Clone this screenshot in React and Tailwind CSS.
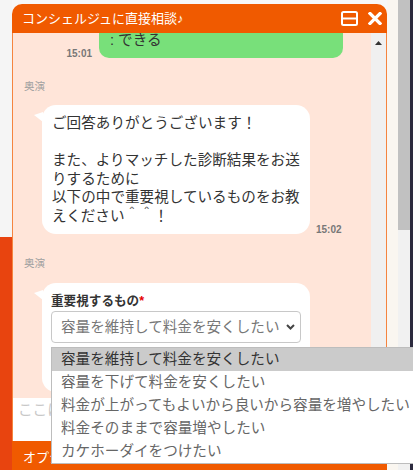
import React from 'react';

const options = [
  '容量を維持して料金を安くしたい',
  '容量を下げて料金を安くしたい',
  '料金が上がってもよいから良いから容量を増やしたい',
  '料金そのままで容量増やしたい',
  'カケホーダイをつけたい',
];

const Tail = () => (
  <svg className="absolute left-[-8px] top-[7px]" width="9" height="10" viewBox="0 0 9 10">
    <path d="M0 3 L9 0 L9 10 Z" fill="#ffffff" />
  </svg>
);

const App = () => {
  return (
    <div className="relative flex w-[413px] h-[470px] overflow-hidden bg-white font-['Liberation_Sans','Noto_Sans_CJK_JP',sans-serif]">
      {/* page behind the widget, left side */}
      <div className="flex flex-col w-[12px] shrink-0">
        <div className="h-[237px] bg-[#f5f5f5]" />
        <div className="flex-1 bg-[#e8440f]" />
      </div>

      {/* chat widget */}
      <div className="flex flex-col w-[375px] shrink-0 pt-[4px] bg-[#f7f7f7]">
        <div className="flex items-center h-[29px] pl-[10px] pr-[5px] rounded-t-[10px] bg-[#f05a00]">
          <span className="flex-1 text-[13px] leading-[16px] text-white">コンシェルジュに直接相談♪</span>
          <svg width="17" height="15" viewBox="0 0 17 15" className="mr-[10px]">
            <rect x="1" y="1" width="15" height="13" rx="1.5" fill="none" stroke="#ffffff" strokeWidth="2" />
            <line x1="1" y1="7.5" x2="16" y2="7.5" stroke="#ffffff" strokeWidth="2" />
          </svg>
          <svg width="14" height="13" viewBox="0 0 14 13">
            <path d="M2 1.5 L12 11.5 M12 1.5 L2 11.5" stroke="#ffffff" strokeWidth="3.2" strokeLinecap="square" />
          </svg>
        </div>

        {/* messages */}
        <div className="flex h-[365px] border-x border-[#f5843f] bg-[#ffe5d9]">
          <div className="flex flex-col flex-1 overflow-hidden">
            <div className="flex items-end justify-end gap-[7px] pr-[28px] -mt-[11px]">
              <span className="text-[10px] leading-[8px] font-semibold text-[#777]">15:01</span>
              <div className="w-[244px] pt-[9px] pb-[8px] pl-[11px] rounded-[10px] bg-[#78e07a] text-[14.6px] leading-[18.5px] text-[#333]">
                : できる
              </div>
            </div>

            <div className="mt-[21.5px] pl-[11px] text-[10.5px] leading-[14px] text-[#a0a0a0]">奥演</div>
            <div className="flex items-end gap-[6px] mt-[12px] pl-[29px]">
              <div className="relative w-[268px] px-[10px] pt-[9px] pb-[9px] rounded-[14px] bg-white text-[14.6px] leading-[18.5px] text-[#333] whitespace-nowrap">
                <Tail />
                ご回答ありがとうございます！
                <br />
                <br />
                また、よりマッチした診断結果をお送
                <br />
                りするために
                <br />
                以下の中で重要視しているものをお教
                <br />
                えください＾＾！
              </div>
              <span className="text-[10px] leading-[8px] font-semibold text-[#777]">15:02</span>
            </div>

            <div className="mt-[21.5px] pl-[11px] text-[10.5px] leading-[14px] text-[#a0a0a0]">奥演</div>
            <div className="flex mt-[13px] pl-[29px]">
              <div className="relative w-[268px] px-[9px] pt-[9px] pb-[49px] rounded-[14px] bg-white">
                <Tail />
                <div className="text-[12.6px] leading-[19px] font-bold text-[#333]">
                  重要視するもの<span className="text-[#e60000]">*</span>
                </div>
                <div className="flex items-center h-[32px] pl-[9px] pr-[5px] border border-[#c8c8c8] rounded-[4px] bg-white">
                  <span className="flex-1 overflow-hidden whitespace-nowrap text-[14.6px] leading-[18px] text-[#777]">
                    容量を維持して料金を安くしたい
                  </span>
                  <svg width="9" height="6" viewBox="0 0 9 6" className="ml-[3px]">
                    <path d="M1 1 L4.5 4.5 L8 1" fill="none" stroke="#444" strokeWidth="2" />
                  </svg>
                </div>
              </div>
            </div>
          </div>

          {/* inner scrollbar */}
          <div className="flex justify-center w-[15px] pt-[8px] bg-[#f0f0f0]">
            <svg width="7" height="4" viewBox="0 0 7 4">
              <path d="M0 4 L3.5 0 L7 4 Z" fill="#333" />
            </svg>
          </div>
        </div>

        {/* input */}
        <div className="h-[43px] pl-[5px] pt-[3px] bg-white border-l border-[#f5843f] text-[14.6px] leading-[18px] text-[#c8c8c8] whitespace-nowrap overflow-hidden">
          ここにメッセージを入力してください
        </div>

        {/* footer */}
        <div className="flex-1 pl-[11px] pt-[9px] bg-[#f05a00] text-[13px] leading-[16px] text-white">
          オプション
        </div>
      </div>

      {/* page behind the widget, right side */}
      <div className="w-[11px] shrink-0 bg-[#faf6f0]" />
      <div className="flex flex-col w-[12px] shrink-0 bg-[#f1f1f1]">
        <div className="h-[230px] bg-[#c1c1c1]" />
      </div>
      <div className="w-[3px] shrink-0 bg-[#2c2a3e]" />

      {/* open select list */}
      <div className="absolute left-[51px] top-[347px] w-[370px] border border-[#bdbdbd] bg-white">
        {options.map((opt, i) => (
          <div
            key={opt}
            className={`h-[23px] pl-[9px] text-[14.6px] leading-[23px] whitespace-nowrap ${
              i === 0 ? 'bg-[#cbcbcb] text-[#333]' : 'text-[#666]'
            }`}
          >
            {opt}
          </div>
        ))}
      </div>
    </div>
  );
};

export default App;
